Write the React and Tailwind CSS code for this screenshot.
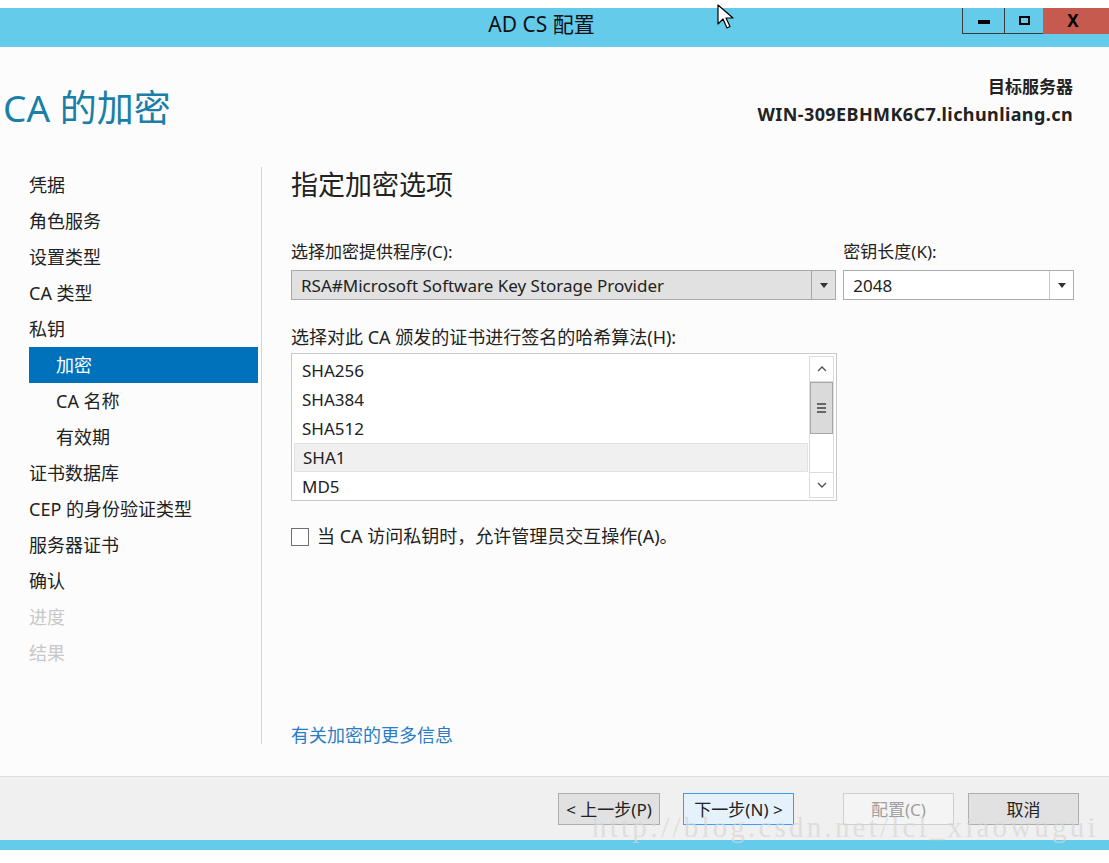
import React from "react"

const steps = [
  { label: "凭据" },
  { label: "角色服务" },
  { label: "设置类型" },
  { label: "CA 类型" },
  { label: "私钥" },
  { label: "加密", sub: true, active: true },
  { label: "CA 名称", sub: true },
  { label: "有效期", sub: true },
  { label: "证书数据库" },
  { label: "CEP 的身份验证类型" },
  { label: "服务器证书" },
  { label: "确认" },
  { label: "进度", disabled: true },
  { label: "结果", disabled: true },
]

const hashes = ["SHA256", "SHA384", "SHA512", "SHA1", "MD5"]

const Caret = () => (
  <svg width="8" height="5" viewBox="0 0 8 5">
    <path d="M0 0h8L4 5z" fill="#333" />
  </svg>
)

const Combo = ({ value, className, gray }) => (
  <div className={`h-[30px] flex border ${gray ? "border-[#a9a9a9] bg-[#e1e1e1]" : "border-[#acacac] bg-white"} ${className}`}>
    <div className="flex-1 flex items-center pl-[9px] text-[17px] text-[#222] leading-none">{value}</div>
    <div className={`w-[24px] flex items-center justify-center border-l ${gray ? "border-[#a9a9a9]" : "border-[#c8c8c8]"}`}>
      <Caret />
    </div>
  </div>
)

const Button = ({ children, className }) => (
  <button className={`h-[32px] border text-[17px] flex items-center justify-center leading-none ${className}`}>
    {children}
  </button>
)

export default function App() {
  return (
    <div className="w-[1109px] h-[863px] bg-white flex flex-col font-['Noto_Sans','Noto_Sans_CJK_SC',sans-serif] text-[#222] overflow-hidden relative">
      <div className="h-[8px] bg-white" />

      {/* Title bar */}
      <div className="h-[39px] bg-[#65cbeb] grid grid-cols-[1fr_auto_1fr]">
        <div />
        <div className="flex items-center pb-[5px] pr-[26px] text-[21px] text-[#111]">AD CS 配置</div>
        <div className="flex justify-end items-start">
          <div className="flex h-[26px]">
            <div className="w-[42px] border-l border-b border-[#3b3b3b] flex items-center justify-center">
              <div className="w-[12px] h-[4px] bg-black mt-[3px]" />
            </div>
            <div className="w-[39px] border-l border-b border-[#3b3b3b] flex items-center justify-center">
              <div className="w-[11px] h-[9px] border-[2px] border-black" />
            </div>
            <div className="w-[66px] bg-[#c75a4e] flex items-center justify-center pr-[6px] text-[17px] font-bold text-black">X</div>
          </div>
        </div>
      </div>

      {/* Main */}
      <div className="h-[729px] bg-[#fcfcfc] flex flex-col">
        <div className="h-[120px] flex items-center justify-between pr-[36px]">
          <div className="pl-[3px] pt-[1px] text-[37px] text-[#1a7fa8]">CA 的加密</div>
          <div className="flex flex-col items-end font-bold text-[#222] -mt-[12px]">
            <div className="text-[17px] leading-[26px]">目标服务器</div>
            <div className="text-[18px] tracking-[0.4px] leading-[28px]">WIN-309EBHMK6C7.lichunliang.cn</div>
          </div>
        </div>

        <div className="flex flex-1">
          {/* Steps */}
          <div className="ml-[29px] w-[229px] flex flex-col">
            {steps.map((s) => (
              <div
                key={s.label}
                className={`h-[36px] flex items-center text-[18px] ${s.sub ? "pl-[27px]" : ""} ${
                  s.active ? "bg-[#0072bc] text-white" : s.disabled ? "text-[#c8c8c8]" : "text-[#222]"
                }`}
              >
                {s.label}
              </div>
            ))}
          </div>

          <div className="ml-[3px] w-px h-[577px] bg-[#d4d4d4]" />

          {/* Content */}
          <div className="pl-[29px] w-[812px] flex flex-col pb-[29px]">
            <div className="h-[36px] flex items-center text-[27px] text-[#222]">指定加密选项</div>

            <div className="mt-[37px] flex gap-[7px]">
              <div className="w-[546px] flex flex-col">
                <div className="h-[24px] flex items-center text-[17px]">选择加密提供程序(C):</div>
                <Combo gray value="RSA#Microsoft Software Key Storage Provider" className="mt-[6px]" />
              </div>
              <div className="w-[231px] flex flex-col">
                <div className="h-[24px] flex items-center text-[17px]">密钥长度(K):</div>
                <Combo value="2048" className="mt-[6px]" />
              </div>
            </div>

            <div className="mt-[25px] h-[24px] flex items-center text-[18px]">选择对此 CA 颁发的证书进行签名的哈希算法(H):</div>

            <div className="mt-[4px] w-[546px] h-[148px] border border-[#c9c9c9] bg-white flex pt-[2px] px-[2px] overflow-hidden">
              <div className="flex-1 flex flex-col">
                {hashes.map((h) => (
                  <div
                    key={h}
                    className={`h-[29px] shrink-0 flex items-center pl-[8px] text-[17px] ${h === "SHA1" ? "bg-[#f0f0f0] border border-[#e2e2e2]" : ""}`}
                  >
                    {h}
                  </div>
                ))}
              </div>
              <div className="w-[25px] ml-[1px] mb-[2px] flex flex-col border border-[#dcdcdc]">
                <div className="h-[25px] flex items-center justify-center border-b border-[#dcdcdc]">
                  <svg width="10" height="6" viewBox="0 0 10 6"><path d="M1 5l4-4 4 4" fill="none" stroke="#555" strokeWidth="1.4" /></svg>
                </div>
                <div className="h-[52px] bg-[#dadada] border border-[#a8a8a8] flex flex-col items-center justify-center gap-[2px]">
                  <div className="w-[9px] h-[2px] bg-[#666]" />
                  <div className="w-[9px] h-[2px] bg-[#666]" />
                  <div className="w-[9px] h-[2px] bg-[#666]" />
                </div>
                <div className="flex-1" />
                <div className="h-[25px] flex items-center justify-center border-t border-[#dcdcdc]">
                  <svg width="10" height="6" viewBox="0 0 10 6"><path d="M1 1l4 4 4-4" fill="none" stroke="#555" strokeWidth="1.4" /></svg>
                </div>
              </div>
            </div>

            <div className="mt-[22px] flex items-center gap-[8px]">
              <div className="w-[18px] h-[18px] border border-[#707070] bg-white" />
              <div className="text-[18px]">当 CA 访问私钥时，允许管理员交互操作(A)。</div>
            </div>

            <div className="mt-auto h-[24px] flex items-center text-[18px] text-[#2a7cc4]">有关加密的更多信息</div>
          </div>
        </div>
      </div>

      {/* Footer */}
      <div className="h-[64px] border-t border-[#dfdfdf] bg-[#f0f0f0] flex items-start pt-[16px] pr-[30px] justify-end">
        <Button className="w-[102px] bg-[#e1e1e1] border-[#adadad] text-[#222]">&lt; 上一步(P)</Button>
        <Button className="ml-[23px] w-[111px] bg-[#e5f1fb] border-[#3c9bf5] text-[#222]">下一步(N) &gt;</Button>
        <Button className="ml-[49px] w-[111px] bg-[#f4f4f4] border-[#cfcfcf] text-[#a0a0a0]">配置(C)</Button>
        <Button className="ml-[14px] w-[111px] bg-[#e1e1e1] border-[#adadad] text-[#222]">取消</Button>
      </div>

      <div className="h-[10px] bg-[#65cbeb]" />
      <div className="flex-1 bg-white" />

      {/* Watermark over footer */}
      <div className="absolute left-[592px] top-[806px] text-[29px] tracking-[3.2px] text-[#d6d6d6]/70 font-['Liberation_Serif',serif] pointer-events-none">
        http://blog.csdn.net/lcl_xiaowugui
      </div>

      {/* Mouse cursor */}
      <svg className="absolute left-[717px] top-[4px]" width="22" height="26" viewBox="0 0 22 26">
        <path d="M1 1v19l5-5 4 9 3-1.5-4-8.5h7z" fill="#fff" stroke="#000" strokeWidth="1.2" strokeLinejoin="round" />
      </svg>
    </div>
  )
}
